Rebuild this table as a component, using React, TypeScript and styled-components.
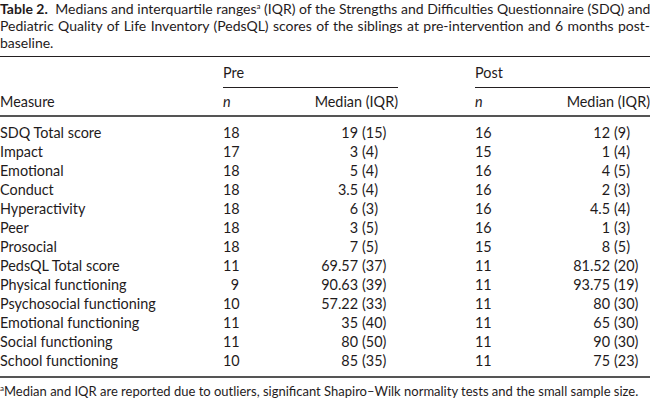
import React from "react";
import styled, { createGlobalStyle } from "styled-components";

const GlobalStyle = createGlobalStyle`
  html, body {
    margin: 0;
    padding: 0;
    background: #ffffff;
  }
  body {
    font-family: Lato, "Open Sans", "Liberation Sans", sans-serif;
    color: #1f1b1c;
  }
`;

const Page = styled.div`
  width: 650px;
  font-size: 14.4px;
`;

const Caption = styled.div`
  font-size: 14px;
  line-height: 17px;
`;

const CaptionLine = styled.div<{ $last?: boolean }>`
  white-space: nowrap;
  text-align: ${(p) => (p.$last ? "left" : "justify")};
  text-align-last: ${(p) => (p.$last ? "left" : "justify")};
`;

const Label = styled.b`
  font-weight: 700;
  margin-right: 4px;
`;

const Sup = styled.sup`
  font-size: 8px;
  line-height: 0;
  vertical-align: 5px;
`;

const TableHead = styled.div`
  margin-top: 5px;
  border-top: 1px solid #231f20;
  border-bottom: 2px solid #555;
`;

const TableBody = styled.div`
  padding: 6px 0 6px;
  border-bottom: 2px solid #555;
`;

const Row = styled.div<{ $h: number }>`
  display: grid;
  grid-template-columns: 223px 16px 119px 40px 77px 16px 119px 40px;
  height: ${(p) => p.$h}px;
  align-items: center;
  line-height: 17px;
`;

const GroupHead = styled.div<{ $col: string }>`
  grid-column: ${(p) => p.$col};
  align-self: stretch;
  display: flex;
  align-items: center;
  border-bottom: 1px solid #231f20;
`;

const HeadCell = styled.div<{ $col?: string; $right?: boolean; $italic?: boolean }>`
  grid-column: ${(p) => p.$col ?? "auto"};
  text-align: ${(p) => (p.$right ? "right" : "left")};
  font-style: ${(p) => (p.$italic ? "italic" : "normal")};
  white-space: nowrap;
`;

const Cell = styled.div<{ $col: number; $align?: "left" | "right" }>`
  grid-column: ${(p) => p.$col};
  text-align: ${(p) => p.$align ?? "left"};
  white-space: nowrap;
`;

const Iqr = styled(Cell)`
  padding-left: 4px;
`;

const Footnote = styled.div`
  margin-top: 5px;
  font-size: 13px;
  line-height: 17px;
`;

type Stat = { n: string; med: string; iqr: string };
type Item = { measure: string; pre: Stat; post: Stat };

const s = (n: string, med: string, iqr: string): Stat => ({ n, med, iqr });

const rows: Item[] = [
  { measure: "SDQ Total score", pre: s("18", "19", "(15)"), post: s("16", "12", "(9)") },
  { measure: "Impact", pre: s("17", "3", "(4)"), post: s("15", "1", "(4)") },
  { measure: "Emotional", pre: s("18", "5", "(4)"), post: s("16", "4", "(5)") },
  { measure: "Conduct", pre: s("18", "3.5", "(4)"), post: s("16", "2", "(3)") },
  { measure: "Hyperactivity", pre: s("18", "6", "(3)"), post: s("16", "4.5", "(4)") },
  { measure: "Peer", pre: s("18", "3", "(5)"), post: s("16", "1", "(3)") },
  { measure: "Prosocial", pre: s("18", "7", "(5)"), post: s("15", "8", "(5)") },
  { measure: "PedsQL Total score", pre: s("11", "69.57", "(37)"), post: s("11", "81.52", "(20)") },
  { measure: "Physical functioning", pre: s("9", "90.63", "(39)"), post: s("11", "93.75", "(19)") },
  { measure: "Psychosocial functioning", pre: s("10", "57.22", "(33)"), post: s("11", "80", "(30)") },
  { measure: "Emotional functioning", pre: s("11", "35", "(40)"), post: s("11", "65", "(30)") },
  { measure: "Social functioning", pre: s("11", "80", "(50)"), post: s("11", "90", "(30)") },
  { measure: "School functioning", pre: s("10", "85", "(35)"), post: s("11", "75", "(23)") },
];

export default function App() {
  return (
    <Page>
      <GlobalStyle />
      <Caption>
        <CaptionLine>
          <Label>Table 2.</Label> Medians and interquartile ranges<Sup>a</Sup> (IQR) of the
          Strengths and Difficulties Questionnaire (SDQ) and
        </CaptionLine>
        <CaptionLine>
          Pediatric Quality of Life Inventory (PedsQL) scores of the siblings at pre-intervention
          and 6 months post-
        </CaptionLine>
        <CaptionLine $last>baseline.</CaptionLine>
      </Caption>

      <TableHead>
        <Row $h={31}>
          <GroupHead $col="2 / 5">Pre</GroupHead>
          <GroupHead $col="6 / 9">Post</GroupHead>
        </Row>
        <Row $h={27}>
          <HeadCell $col="1">Measure</HeadCell>
          <HeadCell $col="2" $italic>
            n
          </HeadCell>
          <HeadCell $col="3 / 5" $right>
            Median (IQR)
          </HeadCell>
          <HeadCell $col="6" $italic>
            n
          </HeadCell>
          <HeadCell $col="7 / 9" $right>
            Median (IQR)
          </HeadCell>
        </Row>
      </TableHead>

      <TableBody>
        {rows.map((r) => (
          <Row $h={19} key={r.measure}>
            <Cell $col={1}>{r.measure}</Cell>
            <Cell $col={2} $align="right">
              {r.pre.n}
            </Cell>
            <Cell $col={3} $align="right">
              {r.pre.med}
            </Cell>
            <Iqr $col={4}>{r.pre.iqr}</Iqr>
            <Cell $col={6} $align="right">
              {r.post.n}
            </Cell>
            <Cell $col={7} $align="right">
              {r.post.med}
            </Cell>
            <Iqr $col={8}>{r.post.iqr}</Iqr>
          </Row>
        ))}
      </TableBody>

      <Footnote>
        <Sup>a</Sup>Median and IQR are reported due to outliers, significant Shapiro–Wilk
        normality tests and the small sample size.
      </Footnote>
    </Page>
  );
}
